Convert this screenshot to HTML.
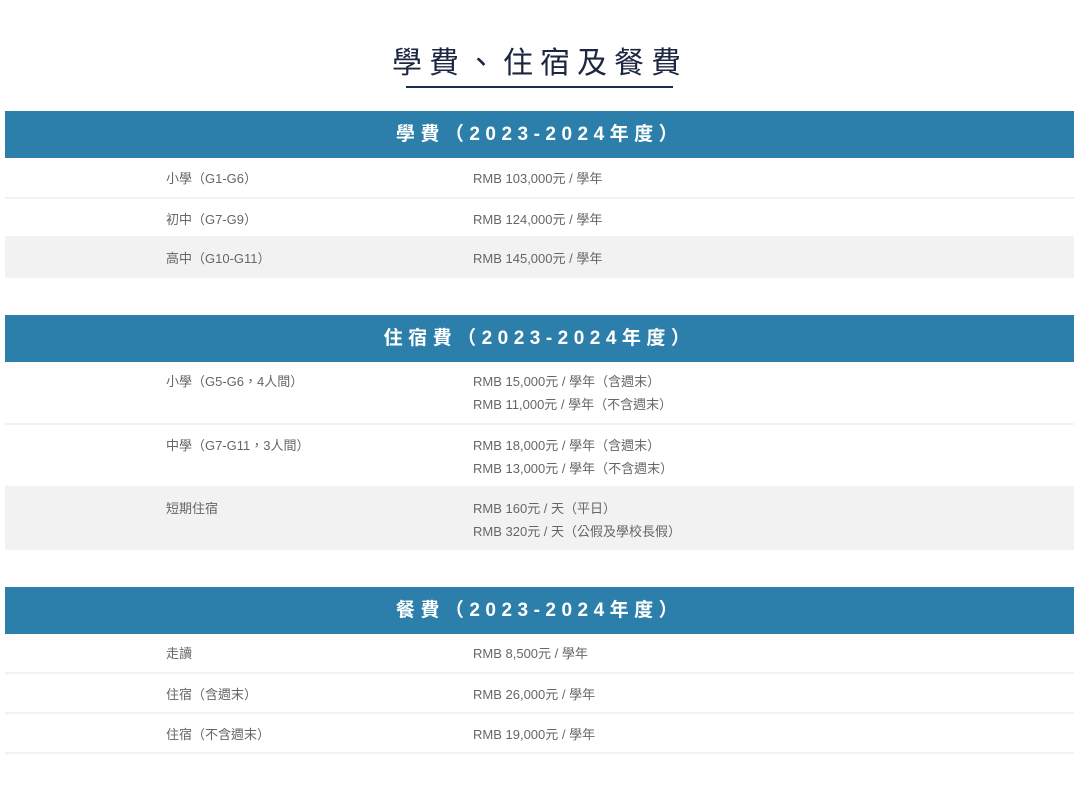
<!DOCTYPE html>
<html><head><meta charset="utf-8"><style>
*{margin:0;padding:0;box-sizing:border-box}
body{width:1080px;height:807px;background:#fff;position:relative;font-family:"Liberation Sans","Noto Sans CJK TC",sans-serif;overflow:hidden}
.title{position:absolute;left:0;width:1080px;top:44px;text-align:center;font-size:30px;color:#1c2640;letter-spacing:7px;line-height:40px}
.uline{position:absolute;left:406px;top:86px;width:267px;height:2px;background:#1c2a55}
.bar{position:absolute;left:5px;width:1069px;height:47px;background:#2d7fab;color:#fff;font-weight:bold;font-size:19px;letter-spacing:5.5px;text-align:center;line-height:47px}
.row{position:absolute;left:5px;width:1069px;border-bottom:2px solid #f2f2f2;font-size:13px;color:#666;line-height:23px}
.row.g{background:#f2f2f2}
.c1{position:absolute;left:161px;top:9px}
.c2{position:absolute;left:468px;top:9px}
</style></head><body>
<div class="title">學費、住宿及餐費</div>
<div class="uline"></div>

<div class="bar" style="top:111px">學費（2023-2024年度）</div>
<div class="row" style="top:158px;height:41px"><div class="c1">小學（G1-G6）</div><div class="c2">RMB 103,000元 / 學年</div></div>
<div class="row" style="top:199px;height:39px"><div class="c1">初中（G7-G9）</div><div class="c2">RMB 124,000元 / 學年</div></div>
<div class="row g" style="top:238px;height:40px"><div class="c1">高中（G10-G11）</div><div class="c2">RMB 145,000元 / 學年</div></div>

<div class="bar" style="top:315px">住宿費（2023-2024年度）</div>
<div class="row" style="top:361px;height:64px"><div class="c1">小學（G5-G6，4人間）</div><div class="c2">RMB 15,000元 / 學年（含週末）<br>RMB 11,000元 / 學年（不含週末）</div></div>
<div class="row" style="top:425px;height:63px"><div class="c1">中學（G7-G11，3人間）</div><div class="c2">RMB 18,000元 / 學年（含週末）<br>RMB 13,000元 / 學年（不含週末）</div></div>
<div class="row g" style="top:488px;height:62px"><div class="c1">短期住宿</div><div class="c2">RMB 160元 / 天（平日）<br>RMB 320元 / 天（公假及學校長假）</div></div>

<div class="bar" style="top:587px">餐費（2023-2024年度）</div>
<div class="row" style="top:633px;height:41px"><div class="c1">走讀</div><div class="c2">RMB 8,500元 / 學年</div></div>
<div class="row" style="top:674px;height:40px"><div class="c1">住宿（含週末）</div><div class="c2">RMB 26,000元 / 學年</div></div>
<div class="row" style="top:714px;height:40px"><div class="c1">住宿（不含週末）</div><div class="c2">RMB 19,000元 / 學年</div></div>
</body></html>
